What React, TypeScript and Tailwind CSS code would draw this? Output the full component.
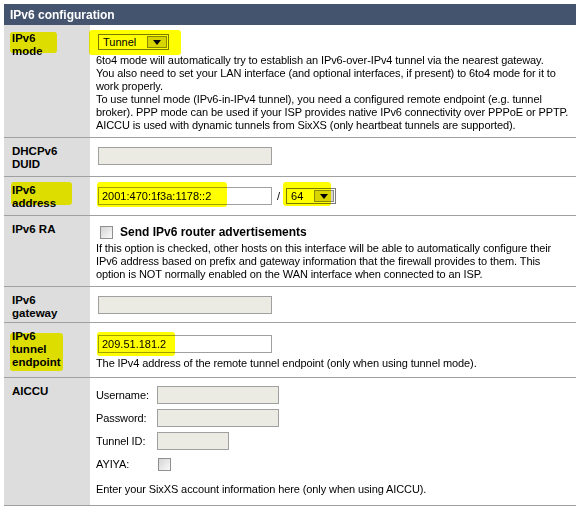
import type { ReactNode } from 'react'

// text sizes used all over the form
const body = 'text-[11px] tracking-[-0.1px] leading-[13px] whitespace-nowrap'

function Row({
  label,
  mark,
  className,
  children,
}: {
  label: ReactNode
  mark?: ReactNode
  className: string
  children: ReactNode
}) {
  return (
    <div className="flex border-b border-[#a0a0a0]">
      <div className="relative w-[86px] shrink-0 bg-[#dddddd] pl-[8px] pt-[7px] text-[11.5px] font-bold leading-[13px]">
        {label}
        {mark}
      </div>
      <div className={'relative flex-1 pl-[6px] ' + className}>{children}</div>
    </div>
  )
}

function Box({ className, value }: { className: string; value?: string }) {
  return (
    <div className={'flex h-[18px] items-center border border-[#a0a0a0] pl-[3px] text-[11px] ' + className}>
      {value}
    </div>
  )
}

function Select({ className, value }: { className: string; value: string }) {
  return (
    <div className={'flex h-[16px] items-center border border-[#7a7a7a] bg-white ' + className}>
      <span className="flex-1 pl-[4px] text-[11px] leading-none">{value}</span>
      <span className="mr-[1px] flex h-[12px] w-[20px] items-center justify-center border border-[#8a8a8a] bg-[#d8d4cc]">
        <svg width="8" height="5" viewBox="0 0 8 5">
          <path d="M0 0h8L4 5z" fill="#000" />
        </svg>
      </span>
    </div>
  )
}

function Check({ className }: { className: string }) {
  return (
    <span
      className={
        'inline-block h-[13px] w-[13px] shrink-0 border border-[#8e8f8f] bg-linear-to-br from-[#d4d4d4] to-[#fafafa] ' +
        className
      }
    />
  )
}

export default function App() {
  return (
    <div className="min-h-[510px] bg-white pl-[4px] pt-[4px] font-['Liberation_Sans',Arial,sans-serif] text-black">
      <div className="w-[572px]">
        <div className="flex h-[21px] items-center bg-[#44546f] pl-[6px] text-[12px] font-bold text-white">
          IPv6 configuration
        </div>

        {/* mode */}
        <Row
          label={<>IPv6<br />mode</>}
          mark={<span className="pointer-events-none absolute left-[6px] top-[7px] h-[21px] w-[47px] rounded-[3px] bg-[#ffff00] mix-blend-multiply blur-[0.5px]" />}
          className="pt-[9px] pb-[5px]"
        >
          <Select className="ml-[2px] w-[71px]" value="Tunnel" />
          <p className={'mt-[4px] ' + body}>
            6to4 mode will automatically try to establish an IPv6-over-IPv4 tunnel via the nearest gateway.
            <br />
            You also need to set your LAN interface (and optional interfaces, if present) to 6to4 mode for it to
            <br />
            work properly.
            <br />
            To use tunnel mode (IPv6-in-IPv4 tunnel), you need a configured remote endpoint (e.g. tunnel
            <br />
            broker). PPP mode can be used if your ISP provides native IPv6 connectivity over PPPoE or PPTP.
            <br />
            AICCU is used with dynamic tunnels from SixXS (only heartbeat tunnels are supported).
          </p>
          <span className="pointer-events-none absolute left-[-1px] top-[5px] h-[25px] w-[92px] rounded-[3px] bg-[#ffff00] mix-blend-multiply blur-[0.5px]" />
        </Row>

        {/* duid */}
        <Row label={<>DHCPv6<br />DUID</>} className="pt-[9px] pb-[11px]">
          <Box className="ml-[2px] w-[174px] bg-[#ebebe4]" />
        </Row>

        {/* address */}
        <Row
          label={<>IPv6<br />address</>}
          mark={<span className="pointer-events-none absolute left-[7px] top-[5px] h-[23px] w-[61px] rounded-[3px] bg-[#ffff00] mix-blend-multiply blur-[0.5px]" />}
          className="flex items-center pt-[10px] pb-[10px]"
        >
          <Box className="ml-[2px] w-[174px] bg-white" value="2001:470:1f3a:1178::2" />
          <span className="ml-[5px] text-[11px]">/</span>
          <Select className="ml-[6px] w-[50px]" value="64" />
          <span className="pointer-events-none absolute left-[7px] top-[5px] h-[25px] w-[130px] rounded-[3px] bg-[#ffff00] mix-blend-multiply blur-[0.5px]" />
          <span className="pointer-events-none absolute left-[193px] top-[5px] h-[24px] w-[48px] rounded-[3px] bg-[#ffff00] mix-blend-multiply blur-[0.5px]" />
        </Row>

        {/* router advertisements */}
        <Row label="IPv6 RA" className="pt-[8px] pb-[5px]">
          <div className="flex h-[16px] items-center">
            <Check className="ml-[4px]" />
            <span className="ml-[7px] text-[12px] font-bold">Send IPv6 router advertisements</span>
          </div>
          <p className={'mt-[2px] ' + body}>
            If this option is checked, other hosts on this interface will be able to automatically configure their
            <br />
            IPv6 address based on prefix and gateway information that the firewall provides to them. This
            <br />
            option is NOT normally enabled on the WAN interface when connected to an ISP.
          </p>
        </Row>

        {/* gateway */}
        <Row label={<>IPv6<br />gateway</>} className="pt-[9px] pb-[8px]">
          <Box className="ml-[2px] w-[174px] bg-[#ebebe4]" />
        </Row>

        {/* tunnel endpoint */}
        <Row
          label={<>IPv6<br />tunnel<br />endpoint</>}
          mark={<span className="pointer-events-none absolute left-[6px] top-[10px] h-[38px] w-[53px] rounded-[3px] bg-[#ffff00] mix-blend-multiply blur-[0.5px]" />}
          className="pt-[12px] pb-[7px]"
        >
          <Box className="ml-[2px] w-[174px] bg-white" value="209.51.181.2" />
          <p className={'mt-[4px] ' + body}>The IPv4 address of the remote tunnel endpoint (only when using tunnel mode).</p>
          <span className="pointer-events-none absolute left-[7px] top-[9px] h-[24px] w-[78px] rounded-[3px] bg-[#ffff00] mix-blend-multiply blur-[0.5px]" />
        </Row>

        {/* aiccu */}
        <Row label="AICCU" className="pt-[8px] pb-[9px]">
          <div className="flex flex-col gap-[5px]">
            <div className="flex h-[18px] items-center">
              <span className={'w-[61px] ' + body}>Username:</span>
              <Box className="w-[122px] bg-[#ebebe4]" />
            </div>
            <div className="flex h-[18px] items-center">
              <span className={'w-[61px] ' + body}>Password:</span>
              <Box className="w-[122px] bg-[#ebebe4]" />
            </div>
            <div className="flex h-[18px] items-center">
              <span className={'w-[61px] ' + body}>Tunnel ID:</span>
              <Box className="w-[72px] bg-[#ebebe4]" />
            </div>
            <div className="flex h-[18px] items-center">
              <span className={'w-[61px] ' + body}>AYIYA:</span>
              <Check className="ml-[1px]" />
            </div>
          </div>
          <p className={'mt-[10px] ' + body}>Enter your SixXS account information here (only when using AICCU).</p>
        </Row>
      </div>
    </div>
  )
}
